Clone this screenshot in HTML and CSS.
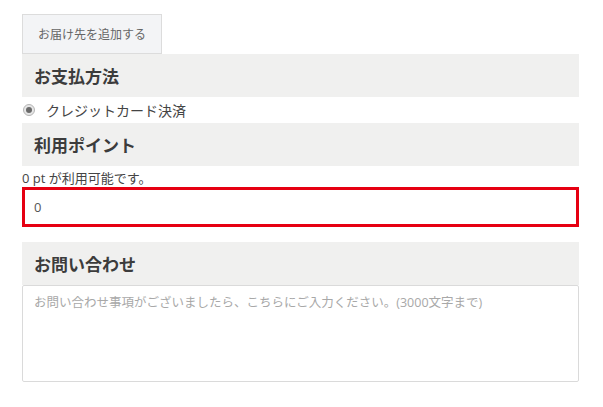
FILE: index.html
```html
<!DOCTYPE html>
<html lang="ja">
<head>
  <meta charset="utf-8">
  <title>ご注文手続き</title>
  <link rel="stylesheet" href="styles.css">
</head>
<body>
  <div class="order">
    <button type="button" class="btn-add">お届け先を追加する</button>

    <h2 class="section-title">お支払方法</h2>
    <label class="pay-option">
      <input type="radio" name="payment" checked>
      <span>クレジットカード決済</span>
    </label>

    <h2 class="section-title">利用ポイント</h2>
    <p class="point-note">0 pt が利用可能です。</p>
    <input type="text" class="point-input" value="0">

    <h2 class="section-title section-gap">お問い合わせ</h2>
    <textarea class="contact-box" placeholder="お問い合わせ事項がございましたら、こちらにご入力ください。(3000文字まで)"></textarea>
  </div>
</body>
</html>
```

FILE: styles.css
```css
body {
  margin: 0;
  background-color: #fff;
  color: #444;
  font-family: "Open Sans", "Noto Sans CJK JP", sans-serif;
}

.order {
  width: 557px;
  padding: 14px 0 0 22px;
  display: flex;
  flex-direction: column;
  align-items: flex-start;
}

.btn-add {
  height: 40px;
  padding: 0 15px;
  background-color: #f3f4f6;
  border: 1px solid #dcdcdc;
  color: #666;
  font-family: inherit;
  font-size: 12px;
}

.section-title {
  align-self: stretch;
  margin: 0;
  height: 43px;
  padding: 0 12px;
  display: flex;
  align-items: center;
  background-color: #f0f0ef;
  color: #3c3c3c;
  font-size: 17px;
  font-weight: bold;
}

.section-gap {
  margin-top: 15px;
}

.pay-option {
  height: 26px;
  display: flex;
  align-items: center;
  gap: 11px;
  font-size: 14px;
  color: #444;
}

.pay-option input {
  appearance: none;
  box-sizing: border-box;
  margin: 0 0 0 1px;
  width: 12px;
  height: 12px;
  border-radius: 50%;
  border: 1px solid #b5b5b5;
  background-color: #e6e6e6;
  position: relative;
}

.pay-option input:checked::after {
  content: "";
  position: absolute;
  left: 2px;
  top: 2px;
  width: 6px;
  height: 6px;
  border-radius: 50%;
  background-color: #6a6a6a;
}

.point-note {
  margin: 3px 0 0;
  height: 18px;
  font-size: 13px;
  line-height: 18px;
  color: #444;
}

.point-input {
  box-sizing: border-box;
  align-self: stretch;
  height: 40px;
  margin: 0;
  padding: 0 9px;
  border: 3px solid #e60012;
  font-family: inherit;
  font-size: 13px;
  color: #555;
  outline: none;
}

.contact-box {
  box-sizing: border-box;
  align-self: stretch;
  height: 97px;
  margin: 0;
  padding: 6px 11px;
  border: 1px solid #dadada;
  border-radius: 2px;
  font-family: inherit;
  font-size: 12.5px;
  color: #555;
  resize: none;
}

.contact-box::placeholder {
  color: #a8a8a8;
}
```
